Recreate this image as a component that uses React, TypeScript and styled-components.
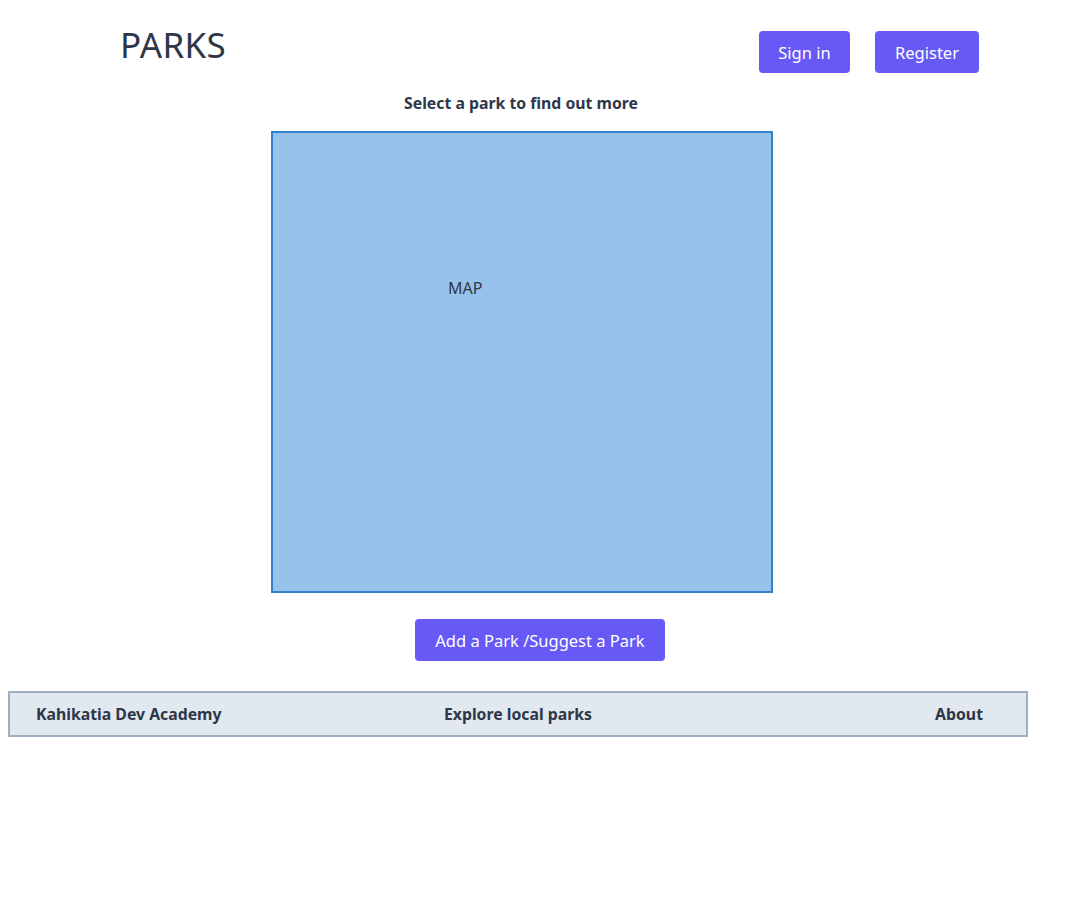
import React from "react";
import styled, { createGlobalStyle } from "styled-components";

const Global = createGlobalStyle`
  body {
    margin: 8px;
    background: #ffffff;
    font-family: "Noto Sans", "DejaVu Sans", sans-serif;
    color: #2d3748;
  }
  * { box-sizing: border-box; }
`;

const Page = styled.div`
  width: 1020px;
  display: flex;
  flex-direction: column;
`;

const Header = styled.header`
  display: flex;
  align-items: flex-start;
  justify-content: space-between;
  padding: 23px 49px 0 113px;
  height: 85px;
`;

const Title = styled.h1`
  margin: -8px 0 0 -1px;
  font-size: 35px;
  font-weight: 400;
  line-height: 44px;
  letter-spacing: 0.3px;
  color: #2d3748;
`;

const Actions = styled.div`
  display: flex;
  gap: 25px;
`;

const Button = styled.button<{ $w: number }>`
  width: ${(p) => p.$w}px;
  height: 42px;
  border: none;
  border-radius: 4px;
  background: #6659f6;
  color: #ffffff;
  font-family: inherit;
  font-size: 16.5px;
  padding: 0;
  cursor: pointer;
`;

const Main = styled.main`
  display: flex;
  flex-direction: column;
  align-items: center;
`;

const Prompt = styled.p`
  margin: 0 0 18px 0;
  font-size: 15.8px;
  font-weight: 700;
  line-height: 20px;
  padding-left: 6px;
`;

const MapBox = styled.div`
  width: 502px;
  height: 462px;
  margin-left: 8px;
  border: 2px solid #3182ce;
  background: #96c2ec;
  padding: 144px 0 0 175px;
  font-size: 16px;
`;

const AddRow = styled.div`
  display: flex;
  justify-content: center;
  padding: 26px 0 30px 44px;
`;

const Footer = styled.footer`
  display: grid;
  grid-template-columns: 1fr auto 1fr;
  align-items: center;
  height: 46px;
  border: 2px solid #a0aec0;
  background: #e2e8f0;
  padding: 0 26px;
  font-size: 15.8px;
  font-weight: 700;
`;

const FootItem = styled.span<{ $align: string; $inset?: number }>`
  justify-self: ${(p) => p.$align};
  margin-right: ${(p) => p.$inset ?? 0}px;
`;

export default function App() {
  return (
    <>
      <Global />
      <Page>
        <Header>
          <Title>PARKS</Title>
          <Actions>
            <Button $w={91}>Sign in</Button>
            <Button $w={104}>Register</Button>
          </Actions>
        </Header>
        <Main>
          <Prompt>Select a park to find out more</Prompt>
          <MapBox>MAP</MapBox>
        </Main>
        <AddRow>
          <Button $w={250}>Add a Park /Suggest a Park</Button>
        </AddRow>
        <Footer>
          <FootItem $align="start">Kahikatia Dev Academy</FootItem>
          <FootItem $align="center">Explore local parks</FootItem>
          <FootItem $align="end" $inset={17}>About</FootItem>
        </Footer>
      </Page>
    </>
  );
}
